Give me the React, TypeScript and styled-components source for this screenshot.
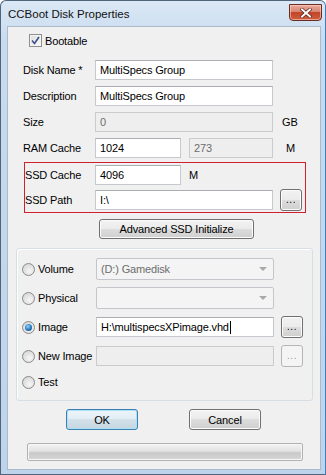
import React from "react";
import styled, { createGlobalStyle, css } from "styled-components";

const GlobalStyle = createGlobalStyle`
  html, body { margin: 0; padding: 0; background: #ffffff; }
  body {
    width: 326px; height: 475px; overflow: hidden;
    font-family: "Liberation Sans", Arial, sans-serif;
    font-size: 11px; letter-spacing: -0.15px; color: #000;
  }
  * { box-sizing: border-box; }
`;

const Window = styled.div`
  width: 326px;
  height: 475px;
  display: flex;
  flex-direction: column;
  background: linear-gradient(#dbe8f5, #c8dbee 40px, #bed4eb);
  border: 1px solid #50657c;
  border-right-color: #3d7fc4;
  border-radius: 6px 6px 0 0;
  padding: 0 4px 4px 6px;
`;

const TitleBar = styled.div`
  height: 25px;
  display: flex;
  align-items: flex-start;
  justify-content: space-between;
`;

const Title = styled.div`
  font-size: 11.5px;
  letter-spacing: 0;
  padding: 7px 0 0 1px;
  color: #111;
`;

const CloseButton = styled.div`
  width: 33px;
  height: 17px;
  margin-top: 3px;
  margin-right: -1px;
  border: 1px solid #6a2c22;
  border-radius: 0 0 4px 4px;
  background: linear-gradient(#e9aa9b, #d88572 45%, #c24528 50%, #cf5e3f);
  box-shadow: inset 0 0 0 1px rgba(255, 220, 210, 0.55);
  display: flex;
  align-items: center;
  justify-content: center;
`;

const Client = styled.div`
  flex: 1;
  background: #f0f0f0;
  border: 1px solid #a9bacc;
  display: flex;
  flex-direction: column;
`;

const CheckRow = styled.label`
  display: flex;
  align-items: center;
  gap: 3px;
  height: 13px;
  margin: 7px 0 0 21px;
`;

const CheckBox = styled.span`
  width: 13px;
  height: 13px;
  border: 1px solid #8e8f8f;
  background: linear-gradient(135deg, #dcdcdc, #fbfbfb);
  box-shadow: inset 0 0 0 1px #f4f4f4;
  display: flex;
  align-items: center;
  justify-content: center;
`;

const Form = styled.div`
  display: flex;
  flex-direction: column;
  gap: 6px;
  margin: 13px 0 0 15px;
`;

const Row = styled.div<{ $h?: number }>`
  display: flex;
  align-items: center;
  height: ${(p) => p.$h ?? 20}px;
`;

const Label = styled.span<{ $w?: number }>`
  width: ${(p) => p.$w ?? 72}px;
  flex: none;
  white-space: nowrap;
`;

const Field = styled.div<{ $w: number; $disabled?: boolean }>`
  width: ${(p) => p.$w}px;
  height: 20px;
  flex: none;
  border: 1px solid #c5c8cd;
  border-top-color: #abadb3;
  background: ${(p) => (p.$disabled ? "#eeeeee" : "#ffffff")};
  color: ${(p) => (p.$disabled ? "#6d6d6d" : "#000")};
  padding: 0 4px;
  display: flex;
  align-items: center;
  white-space: nowrap;
  overflow: hidden;
  ${(p) =>
    p.$disabled &&
    css`
      border-color: #c9cbcf;
    `}
`;

const Caret = styled.span`
  display: inline-block;
  width: 1px;
  height: 13px;
  background: #000;
  margin-left: 1px;
`;

const Unit = styled.span<{ $ml: number }>`
  margin-left: ${(p) => p.$ml}px;
`;

const SsdBox = styled.div`
  width: 282px;
  margin: -2px 0 0 1px;
  border: 1px solid #d0202e;
  padding: 1px 0 1px 0;
  display: flex;
  flex-direction: column;
  gap: 3px;
`;

const buttonBase = css`
  border: 1px solid #707070;
  border-radius: 3px;
  background: linear-gradient(#f2f2f2, #ebebeb 50%, #dddddd 50%, #cfcfcf);
  box-shadow: inset 0 0 0 1px #fcfcfc;
  display: flex;
  align-items: center;
  justify-content: center;
  white-space: nowrap;
  flex: none;
`;

const Button = styled.div<{ $w: number; $h?: number; $default?: boolean }>`
  ${buttonBase};
  width: ${(p) => p.$w}px;
  height: ${(p) => p.$h ?? 21}px;
  ${(p) =>
    p.$default &&
    css`
      border-color: #3c7fb1;
      background: linear-gradient(#ecf4f9, #e2edf4 50%, #d2e1ea 50%, #c6d6e0);
      box-shadow: inset 0 0 0 1px #aee0f7;
    `}
`;

const DotsButton = styled.div<{ $disabled?: boolean; $ml?: number }>`
  ${buttonBase};
  width: 22px;
  height: 22px;
  margin-left: ${(p) => p.$ml ?? 7}px;
  font-size: 10px;
  letter-spacing: 0.5px;
  padding-bottom: 2px;
  color: #000;
  ${(p) =>
    p.$disabled &&
    css`
      border-color: #b5b5b5;
      background: #f4f4f4;
      color: #a0a0a0;
      box-shadow: none;
    `}
`;

const AdvancedButton = styled(Button)`
  margin: 0 0 0 76px;
`;

const Group = styled.div`
  width: 297px;
  margin: 9px 0 0 8px;
  border: 1px solid #d5dfe5;
  border-radius: 3px;
  box-shadow: inset 1px 1px 0 #ffffff;
  padding: 9px 0 10px 5px;
  display: flex;
  flex-direction: column;
  gap: 7px;
`;

const RadioLabel = styled.span`
  width: 74px;
  flex: none;
  display: flex;
  align-items: center;
  gap: 3px;
  white-space: nowrap;
`;

const Radio = styled.span<{ $checked?: boolean }>`
  width: 13px;
  height: 13px;
  border-radius: 50%;
  border: 1px solid #8a8a8a;
  background: radial-gradient(circle at 60% 65%, #f6f6f6, #cfcfcf);
  display: flex;
  align-items: center;
  justify-content: center;
  flex: none;
  &::after {
    content: "";
    display: ${(p) => (p.$checked ? "block" : "none")};
    width: 7px;
    height: 7px;
    border-radius: 50%;
    background: radial-gradient(circle at 40% 35%, #8fd3ff, #1f6fb5 60%, #0d4a85);
  }
`;

const Combo = styled.div`
  width: 178px;
  height: 22px;
  border: 1px solid #c3c6ca;
  border-radius: 2px;
  background: #f4f4f4;
  color: #6d6d6d;
  display: flex;
  align-items: center;
  justify-content: space-between;
  padding: 0 6px 0 4px;
`;

const Arrow = styled.span`
  width: 0;
  height: 0;
  border-left: 4px solid transparent;
  border-right: 4px solid transparent;
  border-top: 4px solid #a9a9a9;
`;

const ButtonRow = styled.div`
  display: flex;
  margin: 8px 0 0 58px;
  gap: 51px;
`;

const Progress = styled.div`
  width: 276px;
  height: 18px;
  margin: 13px 0 0 19px;
  border: 1px solid #b2b2b2;
  border-radius: 2px;
  background: linear-gradient(#f3f3f3, #e2e2e2 45%, #c9c9c9 55%, #d6d6d6);
  box-shadow: inset 0 0 0 1px #f6f6f6;
`;

export default function App() {
  return (
    <>
      <GlobalStyle />
      <Window>
        <TitleBar>
          <Title>CCBoot Disk Properties</Title>
          <CloseButton>
            <svg width="12" height="10" viewBox="0 0 12 10">
              <path d="M2 1.5 L10 8.5 M10 1.5 L2 8.5" stroke="#5a1f16" strokeWidth="3.4" strokeLinecap="square" />
              <path d="M2 1.5 L10 8.5 M10 1.5 L2 8.5" stroke="#ffffff" strokeWidth="2" strokeLinecap="square" />
            </svg>
          </CloseButton>
        </TitleBar>
        <Client>
          <CheckRow>
            <CheckBox>
              <svg width="9" height="9" viewBox="0 0 9 9">
                <path d="M1 4.5 L3.5 7.5 L8 1" stroke="#3b4f8a" strokeWidth="1.6" fill="none" />
              </svg>
            </CheckBox>
            Bootable
          </CheckRow>
          <Form>
            <Row>
              <Label>Disk Name *</Label>
              <Field $w={178}>MultiSpecs Group</Field>
            </Row>
            <Row>
              <Label>Description</Label>
              <Field $w={178}>MultiSpecs Group</Field>
            </Row>
            <Row>
              <Label>Size</Label>
              <Field $w={178} $disabled>0</Field>
              <Unit $ml={9}>GB</Unit>
            </Row>
            <Row>
              <Label>RAM Cache</Label>
              <Field $w={86}>1024</Field>
              <Field $w={84} $disabled style={{ marginLeft: 8 }}>273</Field>
              <Unit $ml={13}>M</Unit>
            </Row>
            <SsdBox>
              <Row $h={22}>
                <Label $w={70}>SSD Cache</Label>
                <Field $w={86}>4096</Field>
                <Unit $ml={8}>M</Unit>
              </Row>
              <Row $h={22}>
                <Label $w={70}>SSD Path</Label>
                <Field $w={178}>I:\</Field>
                <DotsButton>...</DotsButton>
              </Row>
            </SsdBox>
            <AdvancedButton $w={155} $h={20}>Advanced SSD Initialize</AdvancedButton>
          </Form>
          <Group>
            <Row $h={22}>
              <RadioLabel><Radio />Volume</RadioLabel>
              <Combo>(D:) Gamedisk<Arrow /></Combo>
            </Row>
            <Row $h={22}>
              <RadioLabel><Radio />Physical</RadioLabel>
              <Combo><span /><Arrow /></Combo>
            </Row>
            <Row $h={22}>
              <RadioLabel><Radio $checked />Image</RadioLabel>
              <Field $w={178}>H:\multispecsXPimage.vhd<Caret /></Field>
              <DotsButton>...</DotsButton>
            </Row>
            <Row $h={22}>
              <RadioLabel><Radio />New Image</RadioLabel>
              <Field $w={178} $disabled />
              <DotsButton $disabled>...</DotsButton>
            </Row>
            <Row $h={16}>
              <RadioLabel><Radio />Test</RadioLabel>
            </Row>
          </Group>
          <ButtonRow>
            <Button $w={72} $default>OK</Button>
            <Button $w={72}>Cancel</Button>
          </ButtonRow>
          <Progress />
        </Client>
      </Window>
    </>
  );
}
